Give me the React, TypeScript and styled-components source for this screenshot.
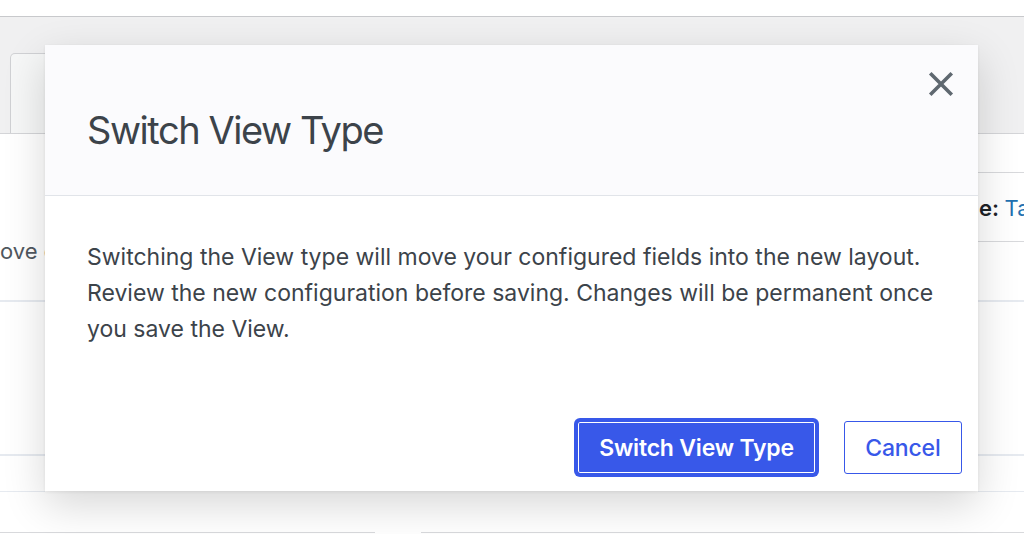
import React from "react";
import styled, { createGlobalStyle } from "styled-components";

const Global = createGlobalStyle`
  html, body { margin: 0; padding: 0; background: #fff; }
  body { font-family: Inter, "Noto Sans", "Liberation Sans", sans-serif; -webkit-font-smoothing: antialiased; }
  * { box-sizing: border-box; }
`;

const Page = styled.div`
  position: relative;
  width: 1024px;
  height: 534px;
  overflow: hidden;
  background: #fff;
  display: flex;
  flex-direction: column;
`;

const TopStrip = styled.div`
  height: 17px;
  flex: none;
  background: #fff;
  border-bottom: 1px solid #c8c9cc;
`;

const TabBand = styled.div`
  height: 117px;
  flex: none;
  background: #f0f0f1;
  border-bottom: 1px solid #d4d5d8;
  display: flex;
  align-items: flex-end;
  padding-left: 10px;
`;

const Tab = styled.div`
  width: 200px;
  height: 80px;
  background: #f6f7f7;
  border: 1px solid #d0d1d4;
  border-bottom: none;
  border-top-left-radius: 5px;
`;

const Content = styled.div`
  flex: 1;
  display: grid;
  grid-template-columns: 45px 1fr 46px;
  overflow: hidden;
`;

const Column = styled.div`
  display: flex;
  flex-direction: column;
  min-width: 0;
  overflow: hidden;
`;

const Row = styled.div<{ $h: number; $line: "gray" | "blue" | "none" }>`
  height: ${(p) => p.$h}px;
  flex: none;
  display: flex;
  align-items: flex-end;
  white-space: nowrap;
  overflow: hidden;
  border-bottom: ${(p) =>
    p.$line === "gray" ? "1px solid #d8d9dc" : p.$line === "blue" ? "2px solid #e6eaf0" : "none"};
`;

const FaintText = styled.span<{ $pb: number }>`
  font-size: 22px;
  color: #50575e;
  padding-bottom: ${(p) => p.$pb}px;
`;

const LabelText = styled.span`
  font-size: 22px;
  font-weight: 600;
  color: #1d2327;
  padding-bottom: 20px;
  padding-left: 1px;
`;

const LinkText = styled.span`
  font-weight: 400;
  color: #2271b1;
`;

const BottomRow = styled.div`
  height: 42px;
  flex: none;
  display: grid;
  grid-template-columns: 375px 1fr;
  column-gap: 46px;
  align-items: end;
`;

const BottomEdge = styled.div`
  height: 2px;
  border-top: 1px solid #d8d9dc;
`;

const Modal = styled.div`
  position: absolute;
  left: 45px;
  top: 45px;
  width: 933px;
  height: 446px;
  background: #fff;
  display: flex;
  flex-direction: column;
  box-shadow: 0 1px 3px rgba(0, 0, 0, 0.07), 0 14px 40px rgba(0, 0, 0, 0.16);
`;

const Header = styled.div`
  height: 151px;
  flex: none;
  background: #fbfbfd;
  border-bottom: 1px solid #e1e4e9;
  display: flex;
  align-items: flex-start;
  justify-content: space-between;
  padding: 0 24px 0 42px;
`;

const Title = styled.h1`
  margin: 61px 0 0;
  font-size: 38px;
  line-height: 48px;
  font-weight: 400;
  color: #3c434a;
  letter-spacing: -1.45px;
`;

const CloseButton = styled.button`
  margin-top: 26px;
  width: 26px;
  height: 26px;
  padding: 0;
  border: none;
  background: transparent;
  display: flex;
  align-items: center;
  justify-content: center;
  cursor: pointer;
  color: #5f6870;
`;

const Body = styled.div`
  flex: 1;
  padding: 43px 21px 0 42px;
`;

const Paragraph = styled.p`
  margin: 0;
  font-size: 23px;
  line-height: 36px;
  color: #3c434a;
`;

const Footer = styled.div`
  display: flex;
  justify-content: flex-end;
  gap: 28px;
  padding: 0 16px 17px 0;
`;

const Button = styled.button<{ $primary?: boolean }>`
  height: 53px;
  padding: ${(p) => (p.$primary ? "0 21px" : "0 20.5px")};
  font-family: Inter, "Noto Sans", "Liberation Sans", sans-serif;
  font-size: 23px;
  font-weight: ${(p) => (p.$primary ? 600 : 500)};
  letter-spacing: -0.2px;
  border-radius: 3px;
  border: 1px solid #3858e9;
  cursor: pointer;
  background: ${(p) => (p.$primary ? "#3858e9" : "#fff")};
  color: ${(p) => (p.$primary ? "#fff" : "#3858e9")};
  box-shadow: ${(p) =>
    p.$primary ? "inset 0 0 0 1px #fff, 0 0 0 3px #3858e9" : "none"};
`;

function CloseIcon() {
  return (
    <svg width="26" height="26" viewBox="0 0 26 26" fill="none">
      <path d="M3.5 3.5 L22.5 22.5 M22.5 3.5 L3.5 22.5" stroke="currentColor" strokeWidth="3.6" strokeLinecap="square" />
    </svg>
  );
}

export default function App() {
  return (
    <>
      <Global />
      <Page>
        <TopStrip />
        <TabBand>
          <Tab />
        </TabBand>
        <Content>
          <Column>
            <Row $h={168} $line="blue">
              <FaintText $pb={36}>ove e</FaintText>
            </Row>
            <Row $h={154} $line="blue" />
            <Row $h={37} $line="blue" />
          </Column>
          <Column />
          <Column>
            <Row $h={39} $line="gray" />
            <Row $h={69} $line="gray">
              <LabelText>
                e: <LinkText>Ta</LinkText>
              </LabelText>
            </Row>
            <Row $h={60} $line="blue" />
            <Row $h={154} $line="blue" />
            <Row $h={37} $line="blue" />
          </Column>
        </Content>
        <BottomRow>
          <BottomEdge />
          <BottomEdge />
        </BottomRow>
        <Modal role="dialog" aria-labelledby="switch-title">
          <Header>
            <Title id="switch-title">Switch View Type</Title>
            <CloseButton aria-label="Close">
              <CloseIcon />
            </CloseButton>
          </Header>
          <Body>
            <Paragraph>
              Switching the View type will move your configured fields into the new layout. Review the new
              configuration before saving. Changes will be permanent once you save the View.
            </Paragraph>
          </Body>
          <Footer>
            <Button $primary>Switch View Type</Button>
            <Button>Cancel</Button>
          </Footer>
        </Modal>
      </Page>
    </>
  );
}
